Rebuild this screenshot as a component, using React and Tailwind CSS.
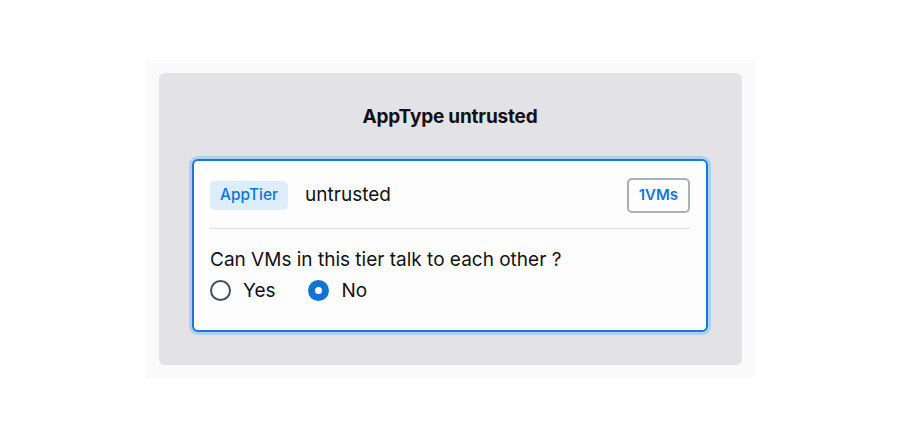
export default function App() {
  return (
    <div
      className="w-[900px] h-[437px] bg-white flex items-center justify-center"
      style={{ fontFamily: 'Inter, "Noto Sans", sans-serif' }}
    >
      <div className="w-[609px] h-[318px] bg-[#fafafa] p-[13px]">
        <div className="w-full h-full bg-[#e3e3e7] rounded-[6px] flex flex-col items-center pt-[32px]">
          <div className="text-[19px] leading-[24px] font-bold text-[#111] tracking-[-0.2px]">
            AppType untrusted
          </div>
          <div className="mt-[30px] w-[516px] h-[173px] bg-[#fdfdfd] border-2 border-[#1b76d6] rounded-[6px] ring-[3px] ring-[#a8d3ee] px-[16px] pt-[17px]">
            <div className="flex items-center h-[35px]">
              <span className="bg-[#dcedfb] text-[#1174d4] text-[15.5px] font-medium rounded-[5px] h-[29px] px-[10px] flex items-center">
                AppTier
              </span>
              <span className="ml-[17px] text-[19px] text-[#111]">untrusted</span>
              <span className="ml-auto h-[35px] px-[10px] border-2 border-[#a8b0b9] rounded-[5px] text-[#1a74d4] text-[15px] font-semibold flex items-center">
                1VMs
              </span>
            </div>
            <div className="mt-[15px] border-t border-[#dedede]" />
            <div className="mt-[20px] text-[19px] leading-[22px] text-[#111]">
              Can VMs in this tier talk to each other ?
            </div>
            <div className="mt-[6px] flex items-center text-[19px] text-[#111]">
              <label className="flex items-center">
                <span className="w-[21px] h-[21px] rounded-full border-2 border-[#3d4f60] bg-white" />
                <span className="ml-[12px]">Yes</span>
              </label>
              <label className="flex items-center ml-[32px]">
                <span className="w-[21px] h-[21px] rounded-full bg-[#1174d4] flex items-center justify-center">
                  <span className="w-[7px] h-[7px] rounded-full bg-white" />
                </span>
                <span className="ml-[13px]">No</span>
              </label>
            </div>
          </div>
        </div>
      </div>
    </div>
  );
}
